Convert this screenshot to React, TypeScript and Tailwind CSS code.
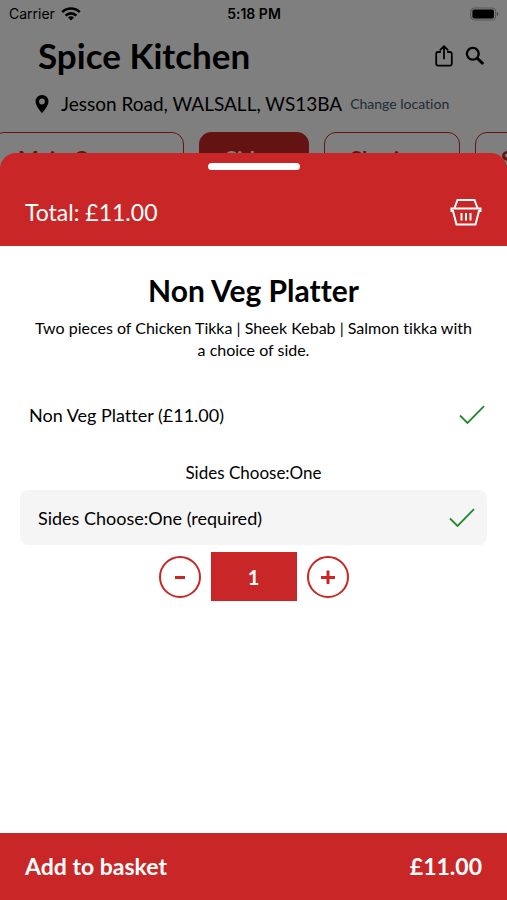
const tabs = [
  { name: "Main Courses", width: "w-48" },
  { name: "Sides", width: "w-[110px]" },
  { name: "Sharing", width: "w-[136px]" },
  { name: "Sundries", width: "w-[140px]" },
]

const tabClass = "h-12 shrink-0 rounded-xl border border-[#c92627] pt-2 pl-[25px] text-left text-[22px] leading-8 font-bold"

function StatusBar() {
  return (
    <div className="grid h-7 grid-cols-3 items-center pr-2 pl-[9px] font-['Inter',sans-serif] text-sm">
      <div className="flex items-center gap-[6px]">
        <span>Carrier</span>
        <svg width="20" height="14" viewBox="0 0 20 14" fill="none" stroke="black" strokeWidth="2.6">
          <path d="M1.2 5.2a12.4 12.4 0 0 1 17.6 0" />
          <path d="M4.6 8.6a7.6 7.6 0 0 1 10.8 0" />
          <path d="M10 13.6 6.9 10.5a4.4 4.4 0 0 1 6.2 0z" fill="black" stroke="none" />
        </svg>
      </div>
      <span className="text-center font-semibold">5:18 PM</span>
      <svg className="justify-self-end" width="31" height="15" viewBox="0 0 31 15">
        <rect x="2.7" y="1" width="25" height="12" rx="4" fill="none" stroke="#b0b0b0" strokeWidth="1.2" />
        <rect x="4.400" y="2.600" width="21.600" height="8.800" rx="2" fill="black" />
        <path d="M29 5v4c1.800-.8 1.800-3.200 0-4z" fill="#888" />
      </svg>
    </div>
  )
}

function TickBox({ id }: { id: string }) {
  return (
    <span className="relative h-5 w-[26px]">
      <input id={id} type="checkbox" defaultChecked className="block h-5 w-[26px] appearance-none" />
      <svg className="pointer-events-none absolute inset-0" width="26" height="20" viewBox="0 0 26 20" fill="none" stroke="#1f8a2c" strokeWidth="1.8">
        <path d="M1 10.500 8.500 18 25 1.200" />
      </svg>
    </span>
  )
}

export default function App() {
  return (
    <div className="flex min-h-screen flex-col bg-white font-['Lato',sans-serif] text-black [font-variant-ligatures:none]">
      <header className="relative overflow-hidden">
        <StatusBar />
        <div className="flex items-center justify-between pt-1 pr-[22px] pl-[38px]">
          <h1 className="pb-[2px] text-[35px] leading-[46px] font-bold">Spice Kitchen</h1>
          <div className="flex items-center gap-3">
            <button aria-label="Share">
              <svg width="18" height="22" viewBox="0 0 18 22" fill="none" stroke="black" strokeWidth="1.8" strokeLinecap="round" strokeLinejoin="round">
                <path d="M5.200 7H3a1.800 1.800 0 0 0-1.800 1.800v10A1.800 1.800 0 0 0 3 20.600h12a1.800 1.800 0 0 0 1.800-1.800v-10A1.800 1.800 0 0 0 15 7h-2.200M9 13.500V1.200M5.300 4.800 9 1.200l3.700 3.600" />
              </svg>
            </button>
            <button aria-label="Search">
              <svg width="20" height="20" viewBox="0 0 20 20" fill="none" stroke="black">
                <circle cx="7.800" cy="7.800" r="5.900" strokeWidth="2.300" />
                <path d="m12 12 6.200 6" strokeWidth="3" />
              </svg>
            </button>
          </div>
        </div>
        <div className="flex items-center pt-2 pl-[35px]">
          <svg width="14" height="18" viewBox="0 0 13 18">
            <path fillRule="evenodd" d="M6.500 0A6.400 6.400 0 0 0 0 6.400C0 11 6.500 18 6.500 18S13 11 13 6.400A6.400 6.400 0 0 0 6.500 0zm0 3.600a2.900 2.900 0 1 1 0 5.800 2.900 2.900 0 0 1 0-5.800z" />
          </svg>
          <span className="pl-3 text-[19px] leading-8">Jesson Road, WALSALL, WS13BA</span>
          <a href="#location" className="pl-2 text-sm text-slate-600">Change location</a>
        </div>
        <nav className="-ml-2 flex gap-[15px] pt-3">
          {tabs.map(({ name, width }) => (
            <button key={name} className={`${tabClass} ${width} ${name === "Sides" ? "bg-[#c92627] text-white" : "text-[#c92627]"}`}>
              {name}
            </button>
          ))}
        </nav>
        <div className="absolute inset-0 bg-black/50" />
      </header>

      <main className="relative -mt-[27px] flex grow flex-col rounded-t-2xl bg-[#c92627]">
        <div className="mx-auto mt-[10px] h-[7px] w-[92px] rounded-full bg-white" />
        <div className="flex h-[76px] items-center justify-between px-[25px] pt-2 text-white">
          <span className="text-[23px]">Total: £11.00</span>
          <button aria-label="Basket">
            <svg width="32" height="28" viewBox="0 0 32 28" fill="none" stroke="white" strokeWidth="2">
              <path d="M4.500 10 7.500 2h17L27.500 10" />
              <path d="M1.500 10.500h29v2.500h-1.500L25.500 26.500h-19L3 13H1.500z" />
              <path d="M11.500 15v7.500M16 15v7.500M20.500 15v7.500" />
            </svg>
          </button>
        </div>

        <section className="grow bg-white px-5 pt-6">
          <h2 className="text-center text-3xl leading-10 font-bold">Non Veg Platter</h2>
          <p className="px-3 pt-[7px] text-center text-base leading-[22px]">
            Two pieces of Chicken Tikka | Sheek Kebab | Salmon tikka with a choice of side.
          </p>
          <div className="mt-[26px] flex h-14 items-center justify-between pr-[2px] pl-[9px] text-lg">
            <label htmlFor="platter">Non Veg Platter (£11.00)</label>
            <TickBox id="platter" />
          </div>
          <h3 className="pt-[14px] text-center text-[17px] leading-8">Sides Choose:One</h3>
          <div className="mt-px flex h-[55px] items-center justify-between rounded-lg bg-[#f5f5f5] pr-3 pl-[18px] text-lg">
            <label htmlFor="sides">Sides Choose:One (required)</label>
            <TickBox id="sides" />
          </div>
          <div className="mt-[7px] flex items-center justify-center gap-[10px] text-[#c92627]">
            <button aria-label="Remove one" className="flex size-[42px] items-center justify-center rounded-full border-2 border-[#c92627]">
              <svg width="14" height="14" viewBox="0 0 14 14" stroke="currentColor" strokeWidth="3">
                <path d="M2 7.500h10" />
              </svg>
            </button>
            <output className="flex h-[49px] w-[86px] items-center justify-center bg-[#c92627] text-xl font-bold text-white">1</output>
            <button aria-label="Add one" className="flex size-[42px] items-center justify-center rounded-full border-2 border-[#c92627]">
              <svg width="14" height="14" viewBox="0 0 14 14" stroke="currentColor" strokeWidth="3">
                <path d="M0 7.500h14M7 .5v13.500" />
              </svg>
            </button>
          </div>
        </section>

        <button className="flex h-[67px] items-center justify-between bg-[#c92627] px-[25px] text-[23px] font-bold text-white">
          <span>Add to basket</span>
          <span>£11.00</span>
        </button>
      </main>
    </div>
  )
}
